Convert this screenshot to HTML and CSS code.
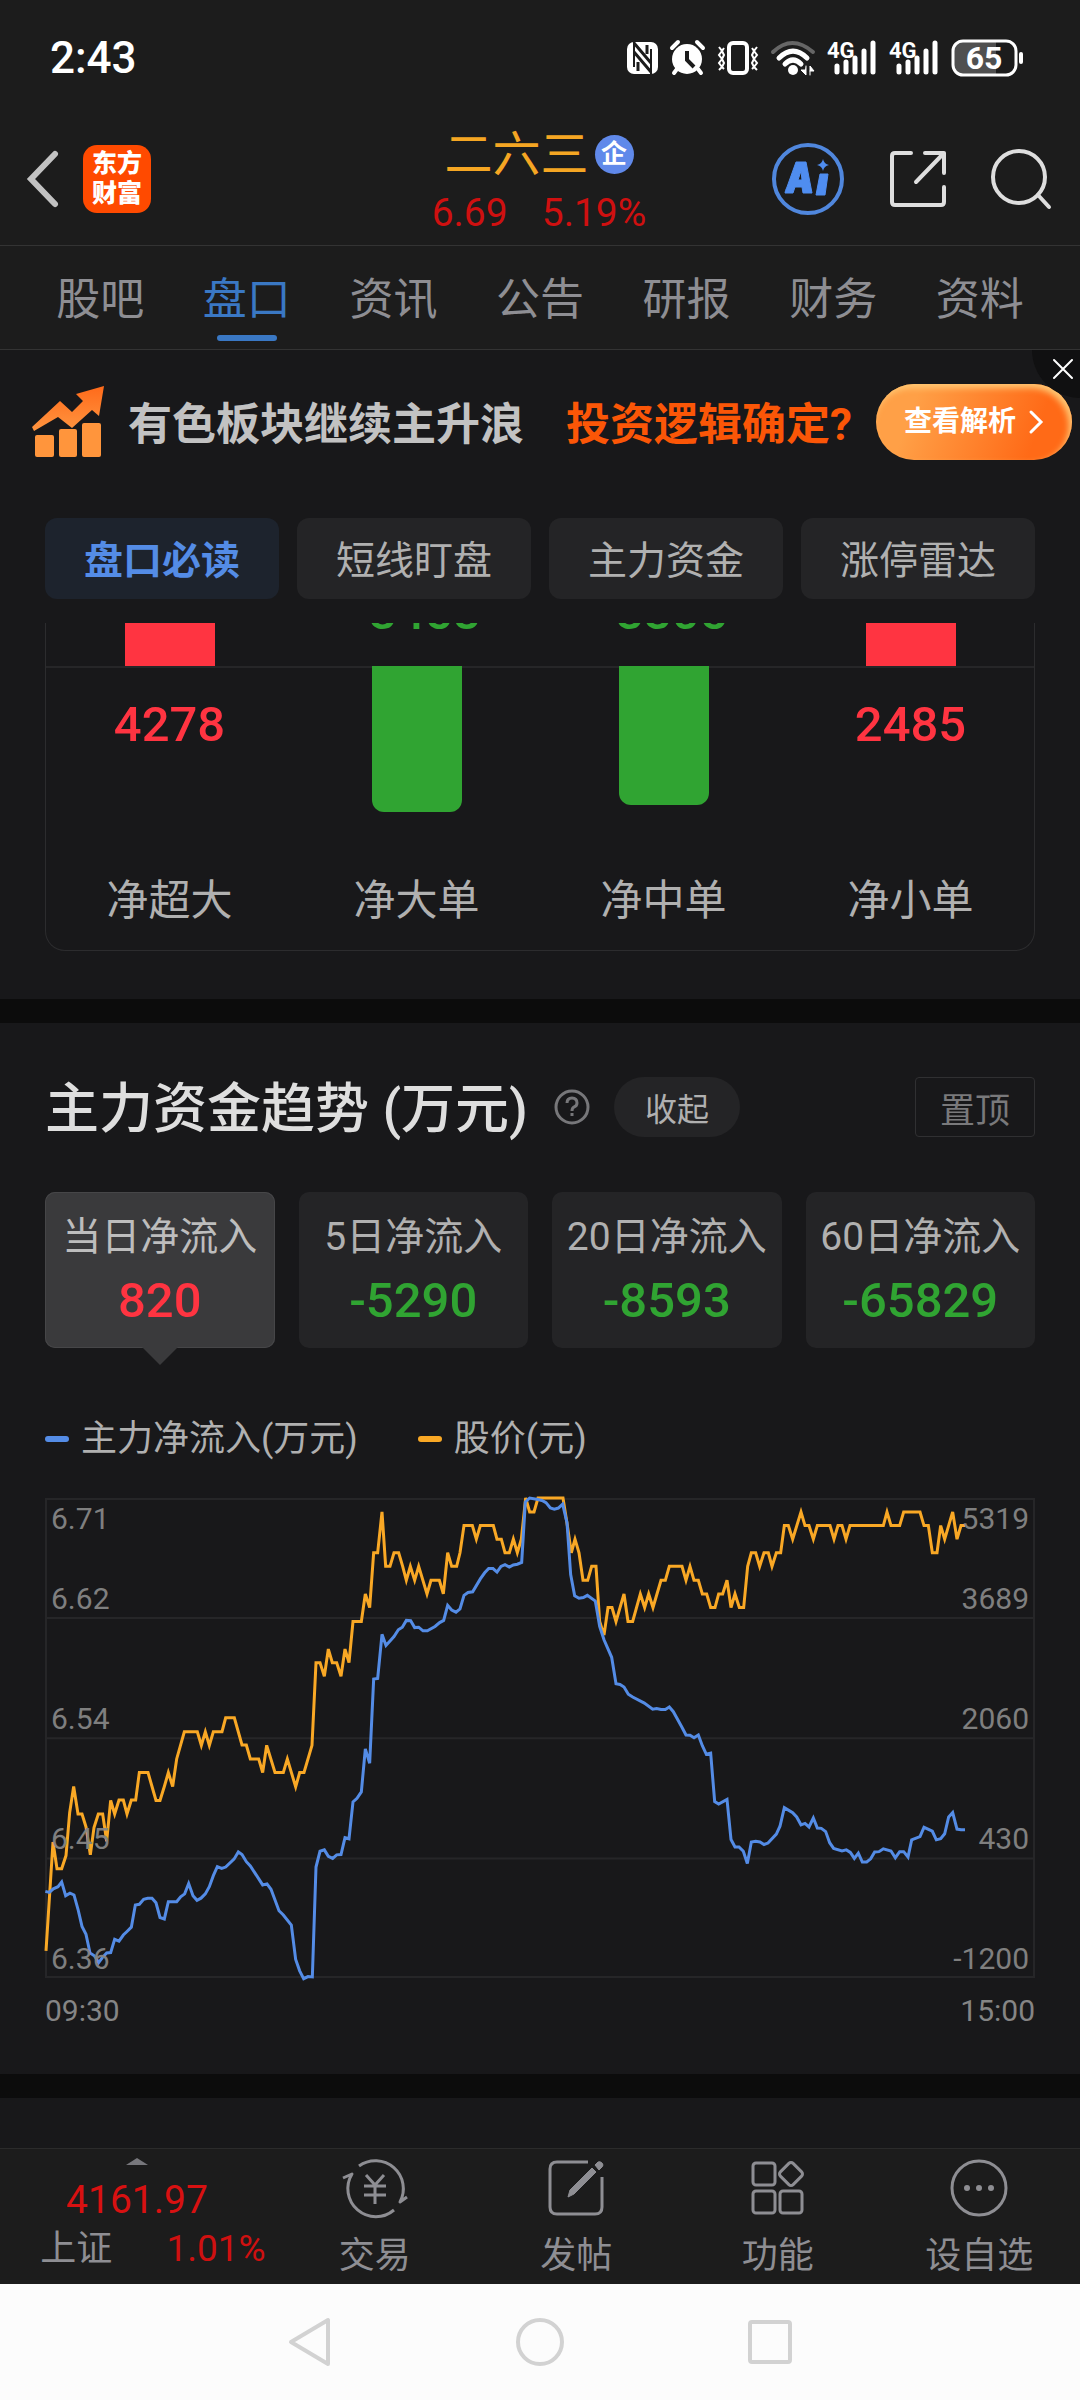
FILE: index.html
```html
<!DOCTYPE html>
<html lang="zh-CN">
<head>
<meta charset="utf-8">
<meta name="viewport" content="width=device-width, initial-scale=1">
<title>二六三 盘口</title>
<link rel="stylesheet" href="styles.css">
</head>
<body>
<div class="status-bar">
  <span class="clock">2:43</span>
  <div class="status-icons">
    <svg width="31" height="36" viewBox="0 0 31 36"><rect x="0" y="2" width="31" height="32" rx="7" fill="#fff"/><path d="M7 2v25M24 9v25" stroke="#1c1c1c" stroke-width="2"/><path d="M7 3l17 20M7 12l17 20M11 22v9M20 5v9" stroke="#1c1c1c" stroke-width="3" fill="none"/></svg>
    <svg width="35" height="36" viewBox="0 0 35 36"><circle cx="17" cy="19" r="15" fill="#fff"/><path d="M2 8l6-6M33 8l-6-6M7 29l-3 4M28 29l3 4" stroke="#fff" stroke-width="4" stroke-linecap="round"/><path d="M17 11v9l7 7" fill="none" stroke="#1c1c1c" stroke-width="4"/></svg>
    <svg width="42" height="36" viewBox="0 0 42 36" fill="none" stroke="#fff"><rect x="12" y="3" width="18" height="30" rx="4" stroke-width="4"/><path d="M2 7l3 4-3 4 3 4-3 4 3 4-3 3M7 8l-2 3 2 4-2 4 2 4-2 4 2 2M40 7l-3 4 3 4-3 4 3 4-3 4 3 3M35 8l2 3-2 4 2 4-2 4 2 4-2 2" stroke-width="2"/></svg>
    <svg width="44" height="36" viewBox="0 0 44 36" fill="none" stroke-linecap="round"><path d="M2 12Q21-6 42 12" stroke="#666" stroke-width="4"/><path d="M8 18Q22 4 36 18M14 24Q22 16 30 24" stroke="#fff" stroke-width="5"/><circle cx="22" cy="30" r="5" fill="#fff"/><path d="M35 26v9l-5-5h4M39 35v-9l4 5h-4" fill="#fff" stroke="#fff" stroke-width="1"/></svg>
    <svg width="50" height="36" viewBox="0 0 50 36"><text x="0" y="18" class="net-type">4G</text><path d="M10 26v6M19 22v10M28 18v14M37 11v21M46 3v29" stroke="#fff" stroke-width="5" stroke-linecap="round"/></svg>
    <svg width="50" height="36" viewBox="0 0 50 36"><text x="0" y="18" class="net-type">4G</text><path d="M10 26v6M19 22v10M28 18v14M37 11v21M46 3v29" stroke="#fff" stroke-width="5" stroke-linecap="round"/></svg>
    <svg width="72" height="38" viewBox="0 0 72 38"><path d="M11 2h34v34H11a9 9 0 0 1-9-9V11a9 9 0 0 1 9-9z" fill="#505050"/><rect x="2" y="2" width="63" height="34" rx="10" fill="none" stroke="#fff" stroke-width="3"/><path d="M70 15v8" stroke="#fff" stroke-width="4" stroke-linecap="round"/><text x="33" y="30" text-anchor="middle" class="charge">65</text></svg>
  </div>
</div>

<header class="stock-header">
  <div class="header-side">
    <button class="icon-button" aria-label="返回"><svg width="32" height="58" viewBox="0 0 32 58"><path d="M28 4L4 29l24 25" fill="none" stroke="#c2c2c2" stroke-width="6" stroke-linecap="round"/></svg></button>
    <span class="brand">东方<br>财富</span>
  </div>
  <div class="stock">
    <h1 class="stock-name">二六三<span class="badge">企</span></h1>
    <p class="quote"><span>6.69</span><span>5.19%</span></p>
  </div>
  <div class="header-side header-actions">
    <button class="icon-button" aria-label="AI"><svg width="74" height="74" viewBox="0 0 74 74"><circle cx="37" cy="37" r="34" fill="none" stroke="#5087dd" stroke-width="4"/><path fill-rule="evenodd" d="M25 20h10l6 31h-9l-1-6h-7l-2 6h-8q0-2 2-6zM27 38h4l-1-9zM49 32h8l-3 21h-9z" fill="#4f8df0" stroke="#4f8df0" stroke-linejoin="round"/><path d="M52 17q1 5 6 6-5 1-6 6-1-5-6-6 5-1 6-6z" fill="#4f8df0"/></svg></button>
    <button class="icon-button" aria-label="分享"><svg width="60" height="60" viewBox="0 0 60 60" fill="none" stroke="#dedede" stroke-width="4" stroke-linecap="round"><path d="M23 4H7q-3 0-3 3v46q0 3 3 3h46q3 0 3-3V38M37 4h19v20M56 4L28 33" stroke-linejoin="round"/></svg></button>
    <button class="icon-button" aria-label="搜索"><svg width="60" height="60" viewBox="0 0 60 60" fill="none" stroke="#dedede" stroke-width="4" stroke-linecap="round"><circle cx="28" cy="28" r="26"/><path d="M47 46l11 12"/></svg></button>
  </div>
</header>

<nav class="tabs">
  <a href="#">股吧</a><a href="#" class="current">盘口</a><a href="#">资讯</a><a href="#">公告</a><a href="#">研报</a><a href="#">财务</a><a href="#">资料</a>
</nav>

<main>
  <aside class="promo">
    <svg width="73" height="72" viewBox="0 0 73 72"><defs><linearGradient id="heat" x1="0" y1="0" x2="0" y2="1" gradientUnits="objectBoundingBox"><stop offset="0" stop-color="#ff6a1a"/><stop offset="1" stop-color="#ff9540"/></linearGradient></defs><path d="M0 41l28-26 12 11 11-11-7-7L72 0l-5 30-7-6-20 18-14-11L2 45z" fill="url(#heat)"/><g fill="#ff953c"><rect x="3" y="49" width="19" height="22" rx="2"/><rect x="27" y="43" width="18" height="28" rx="2"/><rect x="50" y="37" width="19" height="34" rx="2"/></g></svg>
    <span class="promo-lead">有色板块继续主升浪</span>
    <span class="promo-hook">投资逻辑确定?</span>
    <button class="promo-go">查看解析<svg width="16" height="24" viewBox="0 0 16 24"><path d="M3 2l10 10L3 22" fill="none" stroke="#fff" stroke-width="3" stroke-linecap="round"/></svg></button>
    <button class="promo-close" aria-label="关闭"><svg width="22" height="22" viewBox="0 0 22 22"><path d="M2 2l18 18M20 2L2 20" stroke="#fff" stroke-width="2" stroke-linecap="round"/></svg></button>
  </aside>

  <div class="subtabs">
    <button class="active">盘口必读</button><button>短线盯盘</button><button>主力资金</button><button>涨停雷达</button>
  </div>

  <section class="order-flow">
    <div class="flow-upper">
      <div class="flow-col"><i class="bar up"></i></div>
      <div class="flow-col"><span class="figure fall">-3458</span></div>
      <div class="flow-col"><span class="figure fall">-3305</span></div>
      <div class="flow-col"><i class="bar up"></i></div>
    </div>
    <div class="flow-lower">
      <div class="flow-col"><span class="figure rise">4278</span></div>
      <div class="flow-col"><i class="bar down" style="height:146px"></i></div>
      <div class="flow-col"><i class="bar down" style="height:139px"></i></div>
      <div class="flow-col"><span class="figure rise">2485</span></div>
    </div>
    <div class="flow-labels"><span>净超大</span><span>净大单</span><span>净中单</span><span>净小单</span></div>
  </section>

  <section class="trend">
    <div class="trend-head">
      <h2>主力资金趋势 (万元)</h2>
      <button class="icon-button help" aria-label="说明"><svg width="38" height="38" viewBox="0 0 38 38" fill="none" stroke="#77777a" stroke-width="3"><circle cx="19" cy="19" r="16"/><path d="M14 15q0-5 5-5t5 5q0 3-3 4-2 1-2 4" /><path d="M19 25v3"/></svg></button>
      <button class="fold">收起</button>
      <button class="pin">置顶</button>
    </div>
    <div class="periods">
      <button class="period active"><span>当日净流入</span><strong class="rise">820</strong></button>
      <button class="period"><span>5日净流入</span><strong class="fall">-5290</strong></button>
      <button class="period"><span>20日净流入</span><strong class="fall">-8593</strong></button>
      <button class="period"><span>60日净流入</span><strong class="fall">-65829</strong></button>
    </div>
    <div class="legend"><span class="key-flow">主力净流入(万元)</span><span class="key-price">股价(元)</span></div>
    <div class="chart">
      <svg class="plot" viewBox="45 51 2970 1341" preserveAspectRatio="none">
        <path class="grid" d="M48 54H3012V1389H48zM48 386H3012M48 722H3012M48 1058H3012"/>
        <polyline class="price" points="48,1316 69,1012 81,1087 95,1087 108,1050 119,930 131,857 144,934 156,934 168,970 181,1048 192,972 205,934 218,934 230,1010 242,896 254,934 267,895 280,895 291,934 304,895 317,895 328,818 354,818 366,857 378,896 390,896 403,857 415,818 428,857 440,780 463,704 502,704 514,742 526,704 538,742 550,704 576,704 587,665 613,665 636,741 649,741 661,780 686,780 698,818 710,742 735,818 760,818 772,780 797,858 809,818 822,818 846,742 858,511 870,511 883,549 895,473 907,511 920,511 933,549 945,473 957,511 969,396 994,396 1006,319 1019,357 1031,204 1043,204 1056,90 1067,242 1080,242 1092,204 1106,204 1118,242 1129,281 1141,242 1154,281 1166,242 1191,319 1203,281 1228,281 1240,319 1253,204 1265,242 1280,242 1290,204 1302,128 1327,128 1339,166 1351,128 1390,128 1401,166 1414,166 1425,204 1438,204 1450,166 1462,204 1474,166 1487,51 1499,90 1512,90 1524,51 1599,51 1612,128 1624,204 1635,166 1647,204 1659,281 1673,281 1685,242 1698,242 1709,396 1722,434 1734,357 1746,357 1758,396 1782,319 1794,396 1808,396 1831,319 1844,357 1856,319 1869,357 1893,281 1906,281 1918,242 1956,242 1968,281 1980,242 1992,281 2005,281 2017,319 2030,319 2042,357 2055,357 2066,319 2078,319 2091,281 2103,357 2115,319 2128,357 2141,357 2153,242 2164,204 2177,204 2189,242 2202,204 2215,204 2226,242 2239,204 2252,204 2263,128 2275,128 2288,166 2313,90 2325,128 2337,128 2350,166 2362,128 2400,128 2412,166 2424,128 2436,128 2448,166 2460,128 2560,128 2571,90 2583,128 2609,128 2621,90 2670,90 2682,128 2695,128 2707,204 2721,204 2732,128 2744,166 2768,90 2781,166 2793,128 2805,128"/>
        <polyline class="flow" points="46,1150 58,1153 70,1143 84,1137 95,1124 107,1162 120,1155 132,1160 144,1200 156,1248 168,1270 180,1322 193,1330 206,1349 217,1335 230,1322 242,1321 254,1284 267,1289 280,1272 291,1262 304,1250 316,1188 328,1186 341,1172 353,1169 366,1169 378,1182 390,1223 403,1227 415,1179 440,1179 452,1165 464,1157 476,1128 489,1162 501,1175 513,1169 526,1157 538,1137 550,1106 562,1081 575,1086 587,1082 612,1060 625,1040 636,1047 649,1067 661,1079 698,1132 711,1129 723,1144 747,1204 760,1216 784,1244 797,1340 809,1372 821,1394 834,1388 847,1389 858,1082 870,1038 883,1034 895,1052 908,1058 920,1048 933,1047 945,1000 957,1003 969,900 981,890 994,872 1006,752 1019,792 1031,557 1043,555 1056,432 1068,463 1092,438 1105,419 1117,412 1129,393 1142,394 1154,413 1166,412 1179,422 1192,422 1215,410 1229,399 1241,393 1253,351 1265,364 1278,370 1290,361 1302,323 1314,315 1328,313 1351,277 1364,260 1376,248 1389,248 1401,258 1413,242 1425,237 1438,244 1450,238 1462,236 1475,231 1486,62 1499,51 1524,55 1536,58 1548,64 1561,79 1573,82 1585,79 1598,68 1611,120 1622,265 1634,324 1647,331 1660,329 1672,323 1696,339 1709,410 1722,447 1745,496 1758,570 1770,572 1782,579 1795,599 1808,607 1843,624 1868,641 1880,639 1893,642 1906,642 1918,635 1930,648 1955,690 1968,713 1980,714 1992,721 2005,713 2017,743 2029,767 2042,764 2054,899 2066,906 2091,893 2103,1005 2115,1026 2127,1026 2140,1038 2152,1072 2164,1012 2177,1010 2190,1012 2202,1019 2214,1015 2239,990 2250,968 2263,916 2288,930 2300,942 2313,964 2325,960 2337,970 2350,945 2362,973 2374,974 2387,983 2399,1014 2411,1030 2436,1037 2449,1034 2461,1041 2473,1058 2485,1043 2497,1068 2510,1068 2522,1059 2534,1040 2547,1039 2560,1031 2583,1037 2596,1056 2609,1039 2621,1039 2634,1054 2645,1006 2670,997 2682,971 2707,982 2719,1006 2732,1003 2744,989 2756,942 2768,930 2781,976 2793,978 2805,978"/>
      </svg>
      <div class="scale">
        <div class="top-row"><span>6.71</span><span>5319</span></div>
        <div><span>6.62</span><span>3689</span></div>
        <div><span>6.54</span><span>2060</span></div>
        <div><span>6.45</span><span>430</span></div>
        <div><span>6.36</span><span>-1200</span></div>
      </div>
    </div>
    <div class="times"><span>09:30</span><span>15:00</span></div>
  </section>
  <div class="next-section"></div>
</main>

<footer class="toolbar">
  <a href="#" class="index">
    <i class="caret"></i>
    <span class="index-value">4161.97</span>
    <span class="index-row"><span>上证</span><span class="index-change">1.01%</span></span>
  </a>
  <button class="tool"><svg width="66" height="60" viewBox="0 0 66 60" fill="none" stroke="#8e8e93" stroke-width="3"><path d="M17 8a28 28 0 0 1 41 36l7-5M52 52A28 28 0 0 1 10 16l-9 4" stroke-linejoin="round"/><path d="M24 17l9 10 9-10M22 28h22M22 37h22M33 27v19"/></svg><span>交易</span></button>
  <button class="tool"><svg width="60" height="60" viewBox="0 0 60 60" fill="none" stroke="#8e8e93" stroke-width="3"><path d="M42 4H11q-7 0-7 7v38q0 7 7 7h38q7 0 7-7V19" /><path d="M22 39l2-7 22-22 4 4-22 22zM49 7l3-3q2-1 4 1t0 4l-3 3z" fill="#8e8e93" stroke-width="1"/></svg><span>发帖</span></button>
  <button class="tool"><svg width="60" height="60" viewBox="0 0 60 60" fill="none" stroke="#8e8e93" stroke-width="3"><rect x="5" y="5" width="22" height="22" rx="3"/><rect x="5" y="33" width="22" height="22" rx="3"/><rect x="32" y="33" width="22" height="22" rx="3"/><rect x="34" y="7" width="18" height="18" rx="3" transform="rotate(45 43 16)"/></svg><span>功能</span></button>
  <button class="tool"><svg width="60" height="60" viewBox="0 0 60 60"><circle cx="30" cy="30" r="27" fill="none" stroke="#8e8e93" stroke-width="3"/><g fill="#8e8e93"><circle cx="18" cy="30" r="3"/><circle cx="30" cy="30" r="3"/><circle cx="42" cy="30" r="3"/></g></svg><span>设自选</span></button>
</footer>

<nav class="system-nav">
  <button class="icon-button" aria-label="返回"><svg width="50" height="50" viewBox="0 0 50 50" fill="none" stroke="#d2d2d2" stroke-width="4" stroke-linejoin="round"><path d="M43 3v44L6 25z"/></svg></button>
  <button class="icon-button" aria-label="主页"><svg width="50" height="50" viewBox="0 0 50 50" fill="none" stroke="#d2d2d2" stroke-width="4"><circle cx="25" cy="25" r="22"/></svg></button>
  <button class="icon-button" aria-label="最近任务"><svg width="50" height="50" viewBox="0 0 50 50" fill="none" stroke="#d2d2d2" stroke-width="4"><rect x="5" y="5" width="40" height="40" rx="2"/></svg></button>
</nav>
</body>
</html>
```

FILE: styles.css
```css
* { box-sizing: border-box; margin: 0; }
body {
  display: flex;
  flex-direction: column;
  min-height: 100vh;
  background: #18181a;
  color: #b0b0b0;
  font-family: Roboto, "Noto Sans CJK SC", sans-serif;
}
button { padding: 0; border: 0; background: none; color: inherit; font: inherit; }
a { color: inherit; text-decoration: none; }
svg { display: block; flex: none; overflow: visible; }
i { display: block; }
.icon-button { display: block; flex: none; }
.rise { color: #ff3441; }
.fall { color: #30a432; }

/* Status bar */
.status-bar {
  display: flex;
  align-items: center;
  justify-content: space-between;
  height: 112px;
  padding: 4px 57px 0 50px;
  background: #1c1c1c;
  color: #fff;
}
.clock { font-size: 44px; font-weight: 500; }
.status-icons { display: flex; align-items: center; gap: 12px; }
.net-type { font-size: 22px; font-weight: 700; fill: #fff; }
.charge { font-size: 32px; font-weight: 700; fill: #fff; }

/* Header */
.stock-header {
  display: grid;
  grid-template-columns: 1fr auto 1fr;
  align-items: center;
  height: 134px;
  padding: 0 29px 0 27px;
  background: #1c1c1c;
  border-bottom: 1px solid #333;
}
.header-side { display: flex; align-items: center; gap: 24px; }
.header-actions { justify-content: flex-end; gap: 43px; }
.brand {
  width: 68px;
  height: 68px;
  padding-top: 4px;
  border-radius: 14px;
  background: #ff4a00;
  color: #fff;
  font-size: 25px;
  font-weight: 900;
  line-height: 30px;
  text-align: center;
}
.stock { padding-top: 6px; text-align: center; }
.stock-name {
  display: flex;
  align-items: center;
  justify-content: center;
  gap: 6px;
  color: #f5a623;
  font-size: 48px;
  font-weight: 400;
  line-height: 62px;
}
.badge {
  width: 39px;
  height: 39px;
  border-radius: 50%;
  background: #6089ea;
  color: #fff;
  font-size: 26px;
  font-weight: 700;
  line-height: 38px;
}
.quote {
  display: flex;
  justify-content: center;
  gap: 34px;
  color: #cf1010;
  font-size: 39px;
  line-height: 54px;
}

/* Main tabs */
.tabs {
  display: flex;
  height: 104px;
  padding: 0 27px;
  background: #1c1c1c;
  border-bottom: 1px solid #333;
  color: #8e8e93;
  font-size: 44px;
  line-height: 108px;
}
.tabs a { position: relative; flex: 1; height: 103px; text-align: center; }
.tabs .current { color: #3a78c4; }
.tabs .current::after {
  content: "";
  position: absolute;
  bottom: 8px;
  left: 50%;
  width: 60px;
  height: 6px;
  margin-left: -30px;
  border-radius: 3px;
  background: #3a78c4;
}

main { display: flex; flex: 1; flex-direction: column; }

/* Promotion strip */
.promo {
  position: relative;
  display: flex;
  align-items: center;
  height: 110px;
  padding: 34px 8px 0 32px;
  overflow: hidden;
  font-size: 44px;
  font-weight: 700;
  line-height: 70px;
  white-space: nowrap;
}
.promo-lead, .promo-hook { padding-top: 6px; }
.promo-lead { margin-left: 23px; color: #c2c2c2; }
.promo-hook { margin: 0 auto 0 42px; color: #fb5607; }
.promo-go {
  display: flex;
  align-items: center;
  justify-content: center;
  gap: 12px;
  width: 196px;
  height: 76px;
  border-radius: 38px;
  background: linear-gradient(110deg, #ffa047 20%, #ff6a17 80%);
  box-shadow: inset -3px 4px 6px #ffc874;
  color: #fff;
  font-size: 28px;
}
.promo-close {
  position: absolute;
  top: -48px;
  right: -48px;
  width: 96px;
  height: 96px;
  padding: 38px 0 0 20px;
  border-radius: 50%;
  background: #101011;
}

.subtabs {
  display: grid;
  grid-template-columns: repeat(4, 1fr);
  gap: 18px;
  margin: 58px 45px 24px;
}
.subtabs button {
  height: 81px;
  padding-bottom: 3px;
  border-radius: 12px;
  background: #242426;
  font-size: 39px;
}
.subtabs .active { background: #1d232d; color: #548ce6; font-weight: 700; }

/* Net order flow */
.order-flow {
  margin: 0 45px 48px;
  border: 1px solid #2c2c2e;
  border-top: 0;
  border-radius: 0 0 20px 20px;
}
.flow-upper, .flow-lower, .flow-labels { display: grid; grid-template-columns: repeat(4, 1fr); }
.flow-upper { height: 43px; overflow: hidden; }
.flow-col { display: flex; flex-direction: column; align-items: center; }
.flow-upper .flow-col { justify-content: flex-end; height: 43px; }
.flow-upper .figure { padding-bottom: 24px; }
.flow-lower { height: 205px; background: linear-gradient(#262628, #262628) top / 100% 2px no-repeat; }
.flow-lower .figure { padding-top: 30px; }
.figure { font-size: 49px; font-weight: 500; line-height: 58px; }
.bar { width: 90px; }
.bar.up { height: 43px; background: #ff3441; }
.bar.down { border-radius: 0 0 12px 12px; background: #30a432; }
.flow-labels { padding: 2px 0 21px; font-size: 42px; line-height: 56px; text-align: center; }

/* Main capital trend */
.trend { padding: 54px 45px 45px; border-top: 24px solid #0c0c0c; }
.trend-head { display: flex; align-items: center; height: 60px; }
.trend-head h2 { padding-top: 6px; color: #dedede; font-size: 54px; font-weight: 500; line-height: 60px; white-space: nowrap; }
.help { margin: 0 23px 0 25px; }
.fold { width: 126px; height: 60px; border-radius: 30px; background: #242426; font-size: 32px; }
.pin {
  width: 120px;
  height: 60px;
  margin-left: auto;
  border: 1px solid #303032;
  border-radius: 4px;
  color: #79797b;
  font-size: 35px;
}
.periods { display: grid; grid-template-columns: repeat(4, 1fr); gap: 24px; margin-top: 55px; }
.period {
  position: relative;
  display: flex;
  flex-direction: column;
  align-items: center;
  height: 156px;
  padding-top: 13px;
  border-radius: 10px;
  background: #242426;
  font-size: 39px;
  line-height: 64px;
  white-space: nowrap;
}
.period strong { font-size: 49px; font-weight: 500; }
.period.active { background: #3a3a3c; box-shadow: inset 0 0 0 1px #464648; color: #bdbdbd; }
.period.active::after {
  content: "";
  position: absolute;
  top: 155px;
  left: 50%;
  margin-left: -18px;
  border: 18px solid transparent;
  border-top-color: #3a3a3c;
  border-bottom: 0;
}
.legend { display: flex; gap: 60px; margin: 64px 0 32px; font-size: 36px; line-height: 54px; }
.legend span { display: flex; align-items: center; gap: 12px; }
.legend span::before { content: ""; width: 24px; height: 6px; border-radius: 3px; background: #548ce6; }
.legend .key-price::before { background: #f9a825; }

.chart { position: relative; }
.plot { width: 100%; height: 480px; fill: none; }
.plot * { vector-effect: non-scaling-stroke; }
.grid { stroke: #262628; stroke-width: 2px; }
.price { stroke: #f9a825; stroke-width: 3px; }
.flow { stroke: #548ce6; stroke-width: 3px; }
.scale { position: absolute; inset: 0; color: #858585; font-size: 30px; line-height: 38px; }
.scale div { display: flex; align-items: flex-end; justify-content: space-between; height: 120px; padding: 0 6px; opacity: 0.95; }
.scale .top-row { align-items: flex-start; height: 0; padding-top: 2px; }
.scale .top-row + div { height: 118px; }
.times { display: flex; justify-content: space-between; margin-top: 15px; color: #858585; font-size: 30px; line-height: 36px; }
.next-section { flex: 1; min-height: 74px; border-top: 24px solid #0c0c0c; }

/* Toolbar */
.toolbar {
  display: grid;
  grid-template-columns: 274px repeat(4, 1fr);
  height: 136px;
  border-top: 1px solid #2b2b2b;
  background: #1c1c1c;
  color: #8e8e93;
  font-size: 36px;
}
.index { display: flex; flex-direction: column; align-items: center; padding: 9px 0 0; }
.caret { border: 11px solid transparent; border-top: 0; border-bottom: 7px solid #77777c; }
.index-value { margin-top: 11px; color: #d81111; font-size: 39px; line-height: 48px; }
.index-row { display: flex; align-items: center; gap: 54px; padding-left: 32px; line-height: 50px; }
.index-change { color: #cf1010; font-size: 37px; }
.tool { display: flex; flex-direction: column; align-items: center; padding-top: 9px; line-height: 48px; }
.tool span { padding-top: 14px; }

.system-nav {
  display: flex;
  align-items: center;
  justify-content: center;
  gap: 180px;
  height: 116px;
  background: #fcfcfc;
}
```
